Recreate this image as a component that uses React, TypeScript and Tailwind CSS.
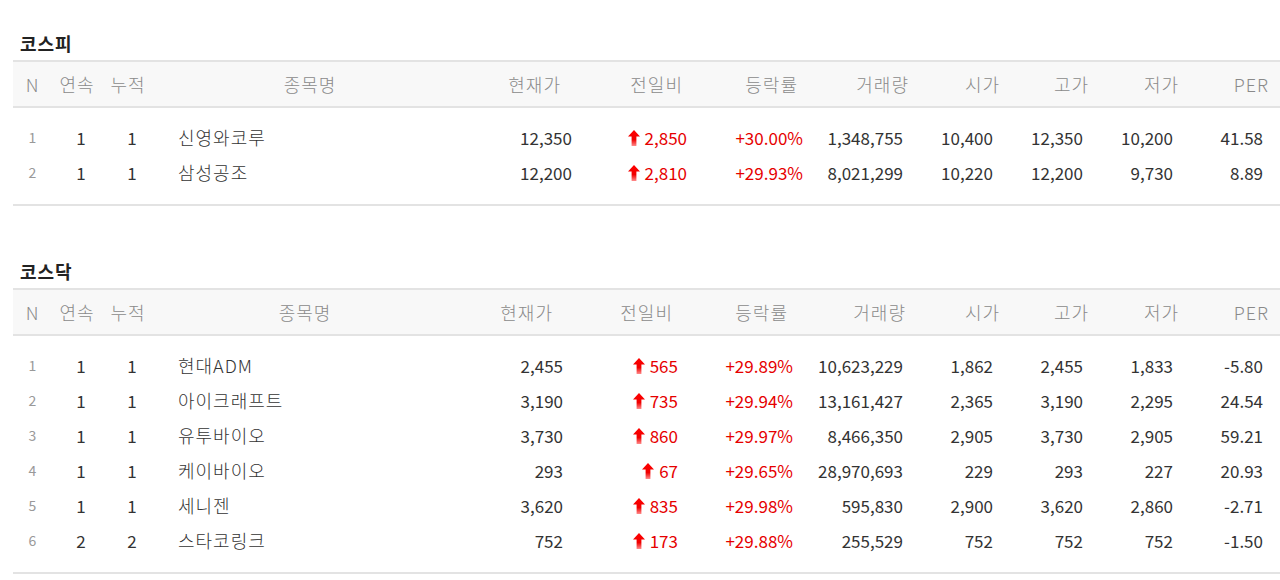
import React from 'react';

type Row = {
  n: number;
  streak: number;
  total: number;
  name: string;
  price: string;
  diff: string;
  rate: string;
  volume: string;
  open: string;
  high: string;
  low: string;
  per: string;
};

type TableConfig = {
  cols: string[];
  th: string[];
  td: string[];
};

const kospi: Row[] = [
  { n: 1, streak: 1, total: 1, name: '신영와코루', price: '12,350', diff: '2,850', rate: '+30.00%', volume: '1,348,755', open: '10,400', high: '12,350', low: '10,200', per: '41.58' },
  { n: 2, streak: 1, total: 1, name: '삼성공조', price: '12,200', diff: '2,810', rate: '+29.93%', volume: '8,021,299', open: '10,220', high: '12,200', low: '9,730', per: '8.89' }
];

const kosdaq: Row[] = [
  { n: 1, streak: 1, total: 1, name: '현대ADM', price: '2,455', diff: '565', rate: '+29.89%', volume: '10,623,229', open: '1,862', high: '2,455', low: '1,833', per: '-5.80' },
  { n: 2, streak: 1, total: 1, name: '아이크래프트', price: '3,190', diff: '735', rate: '+29.94%', volume: '13,161,427', open: '2,365', high: '3,190', low: '2,295', per: '24.54' },
  { n: 3, streak: 1, total: 1, name: '유투바이오', price: '3,730', diff: '860', rate: '+29.97%', volume: '8,466,350', open: '2,905', high: '3,730', low: '2,905', per: '59.21' },
  { n: 4, streak: 1, total: 1, name: '케이바이오', price: '293', diff: '67', rate: '+29.65%', volume: '28,970,693', open: '229', high: '293', low: '227', per: '20.93' },
  { n: 5, streak: 1, total: 1, name: '세니젠', price: '3,620', diff: '835', rate: '+29.98%', volume: '595,830', open: '2,900', high: '3,620', low: '2,860', per: '-2.71' },
  { n: 6, streak: 2, total: 2, name: '스타코링크', price: '752', diff: '173', rate: '+29.88%', volume: '255,529', open: '752', high: '752', low: '752', per: '-1.50' }
];

const headers = ['N', '연속', '누적', '종목명', '현재가', '전일비', '등락률', '거래량', '시가', '고가', '저가', 'PER'];

const kospiConfig: TableConfig = {
  cols: ['w-[39px]', 'w-[50px]', 'w-[52px]', 'w-[312px]', 'w-[124px]', 'w-[110px]', 'w-[115px]', 'w-[105px]', 'w-[90px]', 'w-[90px]', 'w-[90px]', 'w-[90px]'],
  th: ['text-center', 'text-center', 'text-center', 'text-center', 'text-right pr-[29px]', 'text-right pr-[17px]', 'text-right pr-[17px]', 'text-right pr-[11px]', 'text-right pr-[10px]', 'text-right pr-[11px]', 'text-right pr-[11px]', 'text-right pr-[11px]'],
  td: ['text-center', 'text-center pl-2', 'text-center pl-2', 'text-left pl-[24px]', 'text-right pr-[18px]', 'text-right pr-[13px]', 'text-right pr-[12px]', 'text-right pr-[17px]', 'text-right pr-[17px]', 'text-right pr-[17px]', 'text-right pr-[17px]', 'text-right pr-[17px]']
};

const kosdaqConfig: TableConfig = {
  cols: ['w-[39px]', 'w-[50px]', 'w-[52px]', 'w-[302px]', 'w-[124px]', 'w-[110px]', 'w-[115px]', 'w-[115px]', 'w-[90px]', 'w-[90px]', 'w-[90px]', 'w-[90px]'],
  th: ['text-center', 'text-center', 'text-center', 'text-center', 'text-right pr-[27px]', 'text-right pr-[17px]', 'text-right pr-[17px]', 'text-right pr-[14px]', 'text-right pr-[10px]', 'text-right pr-[11px]', 'text-right pr-[11px]', 'text-right pr-[11px]'],
  td: ['text-center', 'text-center pl-2', 'text-center pl-2', 'text-left pl-[24px]', 'text-right pr-[17px]', 'text-right pr-[12px]', 'text-right pr-[12px]', 'text-right pr-[17px]', 'text-right pr-[17px]', 'text-right pr-[17px]', 'text-right pr-[17px]', 'text-right pr-[17px]']
};

const UpArrow = () => (
  <svg width="12" height="16" viewBox="0 0 12 16" className="inline-block align-[-1px] mr-[5px]">
    <defs>
      <linearGradient id="upGrad" x1="0" y1="0" x2="0" y2="1">
        <stop offset="0%" stopColor="#ff0000" />
        <stop offset="60%" stopColor="#f00000" />
        <stop offset="100%" stopColor="#ff8c8c" />
      </linearGradient>
    </defs>
    <path d="M6 0 L12 6.5 H8.4 V16 H3.6 V6.5 H0 Z" fill="url(#upGrad)" />
  </svg>
);

const StockTable = ({ title, rows, config }: { title: string; rows: Row[]; config: TableConfig }) => {
  return <section>
      <h2 className="pl-[20px] h-[32px] text-[18px] font-bold tracking-[1px] text-[#222] leading-[31px]">{title}</h2>
      <table className="table-fixed ml-[13px] w-[1267px] border-collapse">
        <colgroup>
          {config.cols.map((c, i) => <col key={i} className={c} />)}
        </colgroup>
        <thead>
          <tr className="h-[46px] bg-[#f8f8f8] border-t-2 border-b-2 border-[#e3e3e3]">
            {headers.map((h, i) => <th key={h} className={`font-light text-[18px] tracking-[1px] text-[#8a8a8a] ${config.th[i]}`}>
                {h}
              </th>)}
          </tr>
        </thead>
        <tbody className="border-b-2 border-[#e3e3e3]">
          <tr className="h-[13px]"><td colSpan={12}></td></tr>
          {rows.map(r => <tr key={r.n} className="h-[35px] text-[17px] text-[#333]">
                <td className={`text-[14px] text-[#999] ${config.td[0]}`}>{r.n}</td>
                <td className={config.td[1]}>{r.streak}</td>
                <td className={config.td[2]}>{r.total}</td>
                <td className={`text-[18px] font-light tracking-[1px] ${config.td[3]}`}>{r.name}</td>
                <td className={config.td[4]}>{r.price}</td>
                <td className={`text-[#e60000] ${config.td[5]}`}>
                  <UpArrow />
                  {r.diff}
                </td>
                <td className={`text-[#e60000] ${config.td[6]}`}>{r.rate}</td>
                <td className={config.td[7]}>{r.volume}</td>
                <td className={config.td[8]}>{r.open}</td>
                <td className={config.td[9]}>{r.high}</td>
                <td className={config.td[10]}>{r.low}</td>
                <td className={config.td[11]}>{r.per}</td>
              </tr>)}
          <tr className="h-[15px]"><td colSpan={12}></td></tr>
        </tbody>
      </table>
    </section>;
};

const App = () => {
  return <div className="w-[1280px] h-[580px] overflow-hidden bg-white pt-[28px]" style={{
    fontFamily: "'Noto Sans CJK KR', 'Noto Sans', sans-serif"
  }}>
      <StockTable title="코스피" rows={kospi} config={kospiConfig} />
      <div className="h-[50px]" />
      <StockTable title="코스닥" rows={kosdaq} config={kosdaqConfig} />
    </div>;
};

export default App;
